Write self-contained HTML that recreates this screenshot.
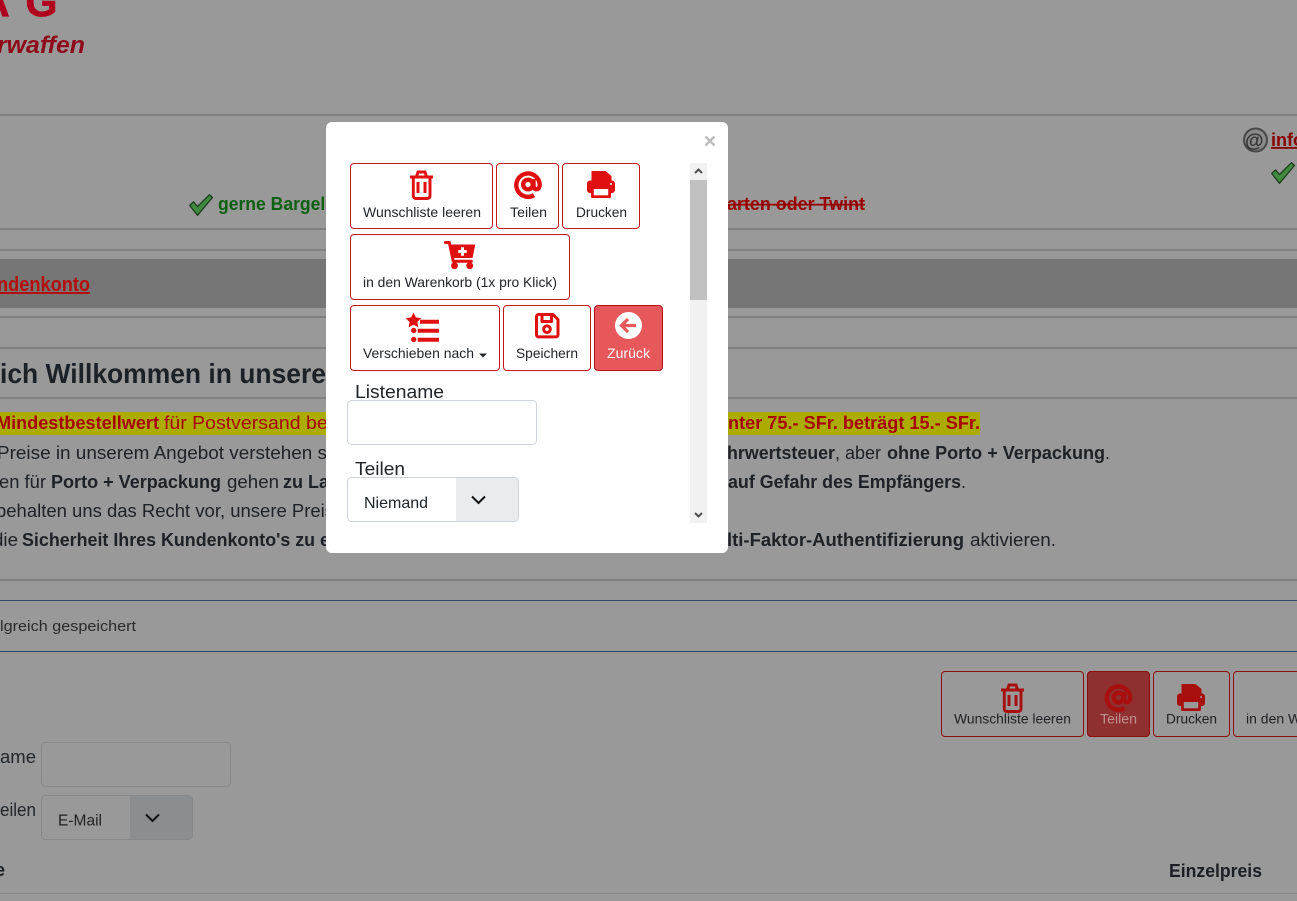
<!DOCTYPE html>
<html lang="de"><head><meta charset="utf-8"><title>Wunschliste</title>
<style>
html,body{margin:0;padding:0;width:1297px;height:901px;overflow:hidden;background:#999}
svg{display:block;font-family:"Liberation Sans",Arial,sans-serif}
.b{font-weight:700}
</style></head><body>
<svg width="1297" height="901" viewBox="0 0 1297 901" xmlns="http://www.w3.org/2000/svg">
<defs>
<g id="trash" fill="none" stroke="currentColor" stroke-width="2.900">
<path d="M0 6.500h23M6.500 6l1.500-4.500h7L16.500 6M3.300 7v18.500A2.500 2.500 0 0 0 5.800 28h11.700a2.500 2.500 0 0 0 2.500-2.500V7"/>
<path d="M8 11.500v11M15 11.500v11" stroke-width="3"/></g>
<g id="at" fill="none" stroke="currentColor" stroke-width="4.400">
<path d="M20 24.200A11.700 11.700 0 1 1 25.700 13.500c0 3-1.300 4.700-3.200 4.700s-3-1.500-3-3.500V8"/>
<circle cx="14" cy="13.500" r="4.800"/></g>
<g id="print"><path fill="currentColor" d="M4.500 0h14l6 5v7h-20z"/><rect fill="currentColor" y="9.500" width="28" height="12.500" rx="3"/><rect fill="currentColor" x="4" y="15" width="20" height="12" rx="1.500"/><rect fill="var(--w,#fff)" x="6.800" y="18" width="14.400" height="6.300"/><circle fill="var(--w,#fff)" cx="24" cy="13" r="1"/></g>
<g id="cart"><path fill="none" stroke="currentColor" stroke-width="3" stroke-linecap="round" stroke-linejoin="round" d="M1.500 1.500h3.800l4 18.800h18"/><path fill="currentColor" d="M5 3.500H31.300L28.500 17H8.500z"/><path stroke="#fff" stroke-width="3" fill="none" d="M18.500 6.300v8.400M14.300 10.500h8.400"/><circle fill="currentColor" cx="10.500" cy="24.700" r="3.400"/><circle fill="currentColor" cx="25.700" cy="24.700" r="3.400"/></g>
<g id="floppy" fill="none" stroke="currentColor" stroke-width="3" stroke-linejoin="round"><path d="M3.500 1.500h14.500l5 5v15.400a2 2 0 0 1-2 2H3.500a2 2 0 0 1-2-2V3.500a2 2 0 0 1 2-2z"/><path d="M7 2v6.500h9.500V2"/><circle cx="12" cy="16.200" r="3.300"/></g>
<g id="check"><path fill="#3f8a3f" stroke="#1d3d1d" stroke-width="1.300" stroke-linejoin="round" d="M.7 11.500 4.500 7.800 8.500 12.500 20.500.7 23.500 3.500 8.500 21.300z"/></g>
</defs>

<!-- page background -->
<rect width="1297" height="901" fill="#999"/>
<text class="b" x="-20" y="16" font-size="41" fill="#b0001e" stroke="#b0001e" stroke-width=".8">A</text>
<text class="b" x="25.500" y="16" font-size="41" fill="#b0001e" stroke="#b0001e" stroke-width=".8">G</text>
<text class="b" x="-3" y="53" font-size="24" font-style="italic" fill="#8f0a1a" textLength="88" lengthAdjust="spacingAndGlyphs">rwaffen</text>

<rect y="114" width="1297" height="2" fill="#808080"/>
<rect y="228" width="1297" height="2" fill="#808080"/>
<rect y="249" width="1297" height="2" fill="#808080"/>
<rect y="259" width="1297" height="49" fill="#767676"/>
<rect y="316" width="1297" height="2" fill="#808080"/>
<rect y="347" width="1297" height="2" fill="#808080"/>
<rect y="397" width="1297" height="2" fill="#808080"/>
<rect y="579" width="1297" height="2" fill="#808080"/>
<rect y="600" width="1297" height="1" fill="#2c4a66"/>
<rect y="651" width="1297" height="1" fill="#2c4a66"/>
<rect y="893" width="1297" height="1" fill="#888"/>

<use href="#check" x="189" y="194"/>
<text class="b" x="218" y="210" font-size="18" fill="#0c6010" textLength="118" lengthAdjust="spacingAndGlyphs">gerne Bargeld</text>
<text class="b" x="727" y="210" font-size="18" fill="#990000" text-decoration="line-through" textLength="138" lengthAdjust="spacingAndGlyphs">arten oder Twint</text>

<circle cx="1255.500" cy="140" r="11.500" fill="#8a8a8a" stroke="#484848" stroke-width="2"/>
<text class="b" x="1245" y="147" font-size="19" fill="#333">@</text>
<text class="b" x="1271" y="146" font-size="18" fill="#8b0000" text-decoration="underline">info</text>
<use href="#check" x="1271" y="162"/>

<text class="b" x="-3" y="291" font-size="20" fill="#b50c0c" text-decoration="underline" textLength="93" lengthAdjust="spacingAndGlyphs">ndenkonto</text>
<text class="b" x="0" y="383" font-size="28" fill="#1c2128" textLength="326" lengthAdjust="spacingAndGlyphs">ich Willkommen in unsere</text>

<rect y="412" width="980" height="23" fill="#acac00"/>
<g font-size="18" fill="#a80000">
<text class="b" x="-4" y="429" textLength="163" lengthAdjust="spacingAndGlyphs">Mindestbestellwert</text>
<text x="164" y="429" textLength="168" lengthAdjust="spacingAndGlyphs">für Postversand bei</text>
<text class="b" x="728" y="429" textLength="252" lengthAdjust="spacingAndGlyphs">nter 75.- SFr. beträgt 15.- SFr.</text>
</g>
<g font-size="18" fill="#1e2126">
<text x="-3" y="459" textLength="330" lengthAdjust="spacingAndGlyphs">Preise in unserem Angebot verstehen s</text>
<text class="b" x="727" y="459" textLength="108" lengthAdjust="spacingAndGlyphs">hrwertsteuer</text>
<text x="835" y="459">, aber</text>
<text class="b" x="887" y="459" textLength="218" lengthAdjust="spacingAndGlyphs">ohne Porto + Verpackung</text>
<text x="1105" y="459">.</text>
<text x="-1" y="488" textLength="47" lengthAdjust="spacingAndGlyphs">en für</text>
<text class="b" x="51" y="488" textLength="170" lengthAdjust="spacingAndGlyphs">Porto + Verpackung</text>
<text x="227" y="488" textLength="52" lengthAdjust="spacingAndGlyphs">gehen</text>
<text class="b" x="283" y="488" textLength="46" lengthAdjust="spacingAndGlyphs">zu La</text>
<text class="b" x="728" y="488" textLength="233" lengthAdjust="spacingAndGlyphs">auf Gefahr des Empfängers</text>
<text x="961" y="488">.</text>
<text x="-4" y="517" textLength="338" lengthAdjust="spacingAndGlyphs">behalten uns das Recht vor, unsere Preis</text>
<text x="-7" y="546" textLength="25" lengthAdjust="spacingAndGlyphs">die</text>
<text class="b" x="22" y="546" textLength="308" lengthAdjust="spacingAndGlyphs">Sicherheit Ihres Kundenkonto's zu e</text>
<text class="b" x="727" y="546" textLength="237" lengthAdjust="spacingAndGlyphs">lti-Faktor-Authentifizierung</text>
<text x="970" y="546" textLength="86" lengthAdjust="spacingAndGlyphs">aktivieren.</text>
</g>

<text x="0" y="631" font-size="15" fill="#2a2a2a" textLength="136" lengthAdjust="spacingAndGlyphs">lgreich gespeichert</text>

<!-- background toolbar -->
<g fill="none" stroke="#8f0c0c">
<rect x="941.500" y="671.500" width="142" height="65" rx="3.500"/>
<rect x="1087.500" y="671.500" width="62" height="65" rx="3.500" fill="#8f3030"/>
<rect x="1153.500" y="671.500" width="76" height="65" rx="3.500"/>
<rect x="1233.500" y="671.500" width="120" height="65" rx="3.500"/>
</g>
<use href="#trash" x="1001" y="683.500" style="color:#a80f0f"/>
<use href="#at" x="1104.500" y="684" style="color:#a80f0f"/>
<use href="#print" x="1177" y="684" style="color:#a80f0f;--w:#999"/>
<g font-size="14" fill="#212225">
<text x="954" y="723.500" textLength="117" lengthAdjust="spacingAndGlyphs">Wunschliste leeren</text>
<text x="1100" y="723.500" fill="#c09090" textLength="37" lengthAdjust="spacingAndGlyphs">Teilen</text>
<text x="1166" y="723.500" textLength="51" lengthAdjust="spacingAndGlyphs">Drucken</text>
<text x="1246" y="723.500">in den Warenkorb</text>
</g>

<!-- background form -->
<text x="0" y="763" font-size="18" fill="#22262a" textLength="36" lengthAdjust="spacingAndGlyphs">ame</text>
<rect x="41.500" y="742.500" width="189" height="44" rx="4" fill="#999" stroke="#888"/>
<text x="0" y="816" font-size="18" fill="#22262a" textLength="36" lengthAdjust="spacingAndGlyphs">eilen</text>
<path d="M130 796h59a3.500 3.500 0 0 1 3.500 3.500v36.500a3.500 3.500 0 0 1-3.500 3.500h-59z" fill="#8c8d8f"/>
<rect x="41.500" y="795.500" width="151" height="44" rx="4" fill="none" stroke="#888"/>
<text x="58" y="825.500" font-size="16" fill="#222" textLength="44" lengthAdjust="spacingAndGlyphs">E-Mail</text>
<path d="M146 814.500l6.500 6.500 6.500-6.500" fill="none" stroke="#111" stroke-width="2"/>
<text class="b" x="-5" y="876" font-size="18" fill="#1b1e22">e</text>
<text class="b" x="1169" y="877" font-size="18" fill="#1b1e22" textLength="93" lengthAdjust="spacingAndGlyphs">Einzelpreis</text>

<!-- modal -->
<rect x="326" y="122" width="402" height="431" rx="6" fill="#fff"/>
<path d="M705.500 136.500l9 9M714.500 136.500l-9 9" stroke="#bcbcbc" stroke-width="2.400" fill="none"/>

<g fill="#fff" stroke="#c4161c">
<rect x="350.500" y="163.500" width="142" height="65" rx="3.500"/>
<rect x="496.500" y="163.500" width="62" height="65" rx="3.500"/>
<rect x="562.500" y="163.500" width="77" height="65" rx="3.500"/>
<rect x="350.500" y="234.500" width="219" height="65" rx="3.500"/>
<rect x="350.500" y="305.500" width="149" height="65" rx="3.500"/>
<rect x="503.500" y="305.500" width="87" height="65" rx="3.500"/>
<rect x="594.500" y="305.500" width="68" height="65" rx="3.500" fill="#e7585b" stroke="#b01018"/>
</g>
<g style="color:#e01010">
<use href="#trash" x="410" y="170.500"/>
<use href="#at" x="514" y="171"/>
<use href="#print" x="587" y="171"/>
<use href="#cart" x="444" y="241"/>
<use href="#floppy" x="535" y="313"/>
<!-- list with star -->
<path fill="#e01010" d="M413.500 312.500l2.400 4.900 5.400.8-3.900 3.800.9 5.300-4.800-2.500-4.800 2.500.9-5.300-3.900-3.800 5.400-.8z"/>
<path fill="#e01010" d="M420 319.700h19v4h-19zM417.700 328.700H439v4h-21.300zM417.700 337.700H439v4h-21.300z"/>
<circle cx="413.700" cy="330.500" r="2.700" fill="#e01010"/>
<circle cx="413.700" cy="339.500" r="2.700" fill="#e01010"/>
</g>
<circle cx="628.500" cy="325.500" r="13.500" fill="#fff"/>
<path d="M636 325.500H622M628 319l-6.500 6.500 6.500 6.500" fill="none" stroke="#e7585b" stroke-width="3.200"/>

<g font-size="14" fill="#212529">
<text x="363" y="217" textLength="118" lengthAdjust="spacingAndGlyphs">Wunschliste leeren</text>
<text x="510" y="217" textLength="37" lengthAdjust="spacingAndGlyphs">Teilen</text>
<text x="576" y="217" textLength="51" lengthAdjust="spacingAndGlyphs">Drucken</text>
<text x="363" y="287" textLength="194" lengthAdjust="spacingAndGlyphs">in den Warenkorb (1x pro Klick)</text>
<text x="363" y="358" textLength="111" lengthAdjust="spacingAndGlyphs">Verschieben nach</text>
<text x="516" y="358" textLength="62" lengthAdjust="spacingAndGlyphs">Speichern</text>
<text x="607" y="358" fill="#fff" textLength="43" lengthAdjust="spacingAndGlyphs">Zurück</text>
</g>
<path d="M479 353.500h8l-4 4z" fill="#212529"/>

<text x="355" y="398" font-size="18" fill="#212529" textLength="89" lengthAdjust="spacingAndGlyphs">Listename</text>
<rect x="347.500" y="400.500" width="189" height="44" rx="4" fill="#fff" stroke="#ced4da"/>
<text x="355" y="475" font-size="18" fill="#212529" textLength="50" lengthAdjust="spacingAndGlyphs">Teilen</text>
<path d="M456 478h59a3.500 3.500 0 0 1 3.500 3.500v36.500a3.500 3.500 0 0 1-3.500 3.500h-59z" fill="#e9ecef"/>
<rect x="347.500" y="477.500" width="171" height="44" rx="4" fill="none" stroke="#ced4da"/>
<text x="364" y="508" font-size="16" fill="#212529" textLength="64" lengthAdjust="spacingAndGlyphs">Niemand</text>
<path d="M472 496.500l6.500 6.500 6.500-6.500" fill="none" stroke="#111" stroke-width="2"/>

<!-- scrollbar -->
<rect x="690" y="163" width="17" height="360" fill="#f1f1f1"/>
<rect x="690" y="180" width="17" height="120" fill="#c1c1c1"/>
<path d="M695 173l3.500-3.500 3.500 3.500" fill="none" stroke="#505050" stroke-width="2"/>
<path d="M695 513l3.500 3.500 3.500-3.500" fill="none" stroke="#505050" stroke-width="2"/>
</svg>
</body></html>
